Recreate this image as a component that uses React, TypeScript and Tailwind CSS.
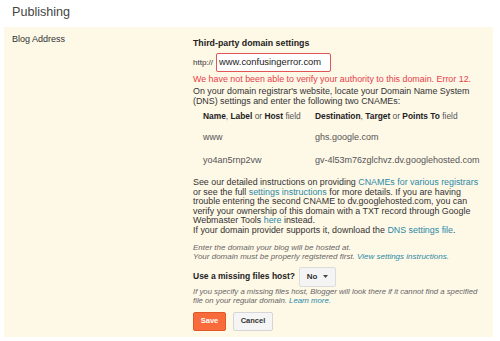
import React from "react";

const link = "text-[#2a89a6]";

export default function App() {
  return (
    <div className="w-[500px] h-[341px] bg-white font-['Liberation_Sans',Arial,sans-serif] text-[#333] overflow-hidden">
      <h1 className="pl-[12px] pt-[4px] h-[27px] text-[12.6px] leading-[16px] text-[#444]">Publishing</h1>
      <div className="ml-[4px] w-[489px] h-[310px] bg-[#fef8e7] flex">
        <div className="w-[189px] pl-[8px] pt-[6px] text-[9px] leading-[12px] text-[#333]">Blog Address</div>
        <div className="flex-1 pt-[10px] whitespace-nowrap">
          <div className="text-[8.8px] leading-[12px] font-bold text-[#222]">Third-party domain settings</div>
          <div className="flex items-center mt-[4px] gap-[3px]">
            <span className="text-[8px] text-[#333]">http://</span>
            <div className="w-[115px] h-[19px] border border-[#e05555] rounded-[2px] bg-white px-[2px] flex items-center text-[9.4px] text-[#222]">
              www.confusingerror.com
            </div>
          </div>
          <div className="mt-[2px] text-[8.9px] leading-[10px] text-[#e6404a]">
            We have not been able to verify your authority to this domain. Error 12.
          </div>
          <div className="mt-[2px] text-[8.9px] leading-[10px]">
            On your domain registrar's website, locate your Domain Name System
            <br />
            (DNS) settings and enter the following two CNAMEs:
          </div>
          <div className="mt-[4px] pl-[10px] grid grid-cols-[112px_1fr] text-[8.4px] leading-[12px] text-[#555]">
            <div>
              <b className="text-[#222]">Name</b>, <b className="text-[#222]">Label</b> or <b className="text-[#222]">Host</b> field
            </div>
            <div>
              <b className="text-[#222]">Destination</b>, <b className="text-[#222]">Target</b> or <b className="text-[#222]">Points To</b> field
            </div>
            <div className="mt-[9px] text-[9px]">www</div>
            <div className="mt-[9px] text-[9px]">ghs.google.com</div>
            <div className="mt-[11px] text-[9px]">yo4an5rnp2vw</div>
            <div className="mt-[11px] text-[9px]">gv-4l53m76zglchvz.dv.googlehosted.com</div>
          </div>
          <div className="mt-[12px] text-[8.9px] leading-[9.6px]">
            See our detailed instructions on providing <span className={link}>CNAMEs for various registrars</span>
            <br />
            or see the full <span className={link}>settings instructions</span> for more details. If you are having
            <br />
            trouble entering the second CNAME to dv.googlehosted.com, you can
            <br />
            verify your ownership of this domain with a TXT record through Google
            <br />
            Webmaster Tools <span className={link}>here</span> instead.
            <br />
            If your domain provider supports it, download the <span className={link}>DNS settings file</span>.
          </div>
          <div className="mt-[7px] text-[8px] leading-[9px] italic text-[#666]">
            Enter the domain your blog will be hosted at.
            <br />
            Your domain must be properly registered first. <span className={link}>View settings instructions.</span>
          </div>
          <div className="mt-[6px] flex items-center gap-[4px]">
            <span className="text-[8.5px] font-bold text-[#222]">Use a missing files host?</span>
            <div className="w-[37px] h-[20px] border border-[#dcdcdc] rounded-[2px] bg-[#f4f4f4] flex items-center justify-center gap-[6px] text-[8px] font-bold text-[#333]">
              No
              <svg width="5" height="3" viewBox="0 0 5 3"><path d="M0 0h5L2.5 3z" fill="#444" /></svg>
            </div>
          </div>
          <div className="text-[7.75px] leading-[9.5px] italic text-[#666]">
            If you specify a missing files host, Blogger will look there if it cannot find a specified
            <br />
            file on your regular domain. <span className={link}>Learn more.</span>
          </div>
          <div className="mt-[6px] flex gap-[7px]">
            <button className="w-[33px] h-[19px] rounded-[2px] bg-[#f96b3b] border border-[#e0582a] text-white text-[7.5px] font-bold">Save</button>
            <button className="w-[40px] h-[19px] rounded-[2px] bg-[#f5f5f5] border border-[#d6d6d6] text-[#333] text-[7.5px] font-bold">Cancel</button>
          </div>
        </div>
      </div>
    </div>
  );
}
